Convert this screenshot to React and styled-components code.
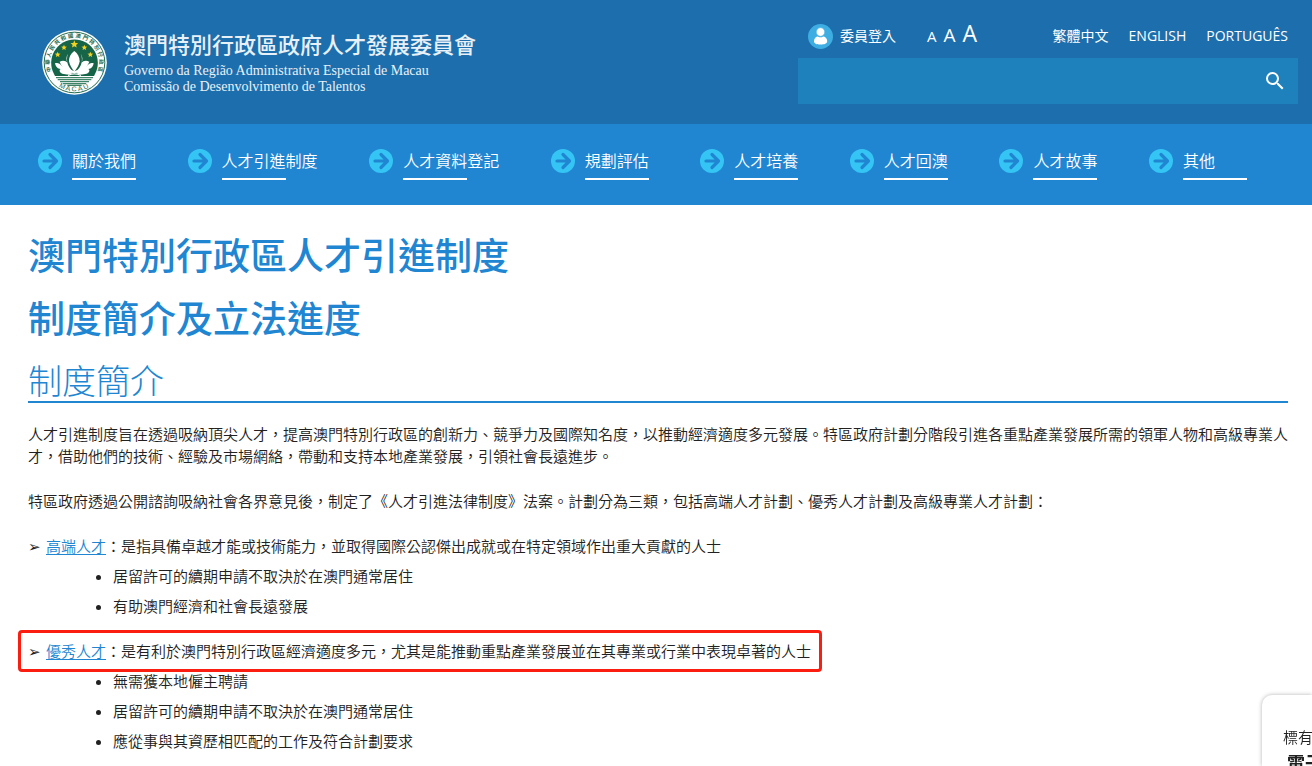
import React from "react";
import styled, { createGlobalStyle } from "styled-components";

const GlobalStyle = createGlobalStyle`
  * { box-sizing: border-box; }
  body {
    margin: 0;
    background: #fff;
    color: #212121;
    font-family: "Open Sans", "Noto Sans CJK TC", sans-serif;
    font-size: 15px;
    text-spacing-trim: space-all;
  }
  h1, h2, h3, p, ul { margin: 0; padding: 0; }
  a { color: inherit; text-decoration: none; }
  button { padding: 0; border: 0; background: none; color: inherit; font: inherit; cursor: pointer; }
`;

const Header = styled.header`
  display: flex;
  justify-content: space-between;
  align-items: flex-start;
  min-height: 124px;
  padding: 24px 14px 20px 42px;
  background: #1c6eac;
  color: #fff;
`;

const Brand = styled.a`
  display: flex;
  gap: 17px;
  padding-top: 6px;
`;

const BrandText = styled.span`
  display: flex;
  flex-direction: column;
  white-space: nowrap;
  color: #e9f1f8;
  font-family: "Liberation Serif", serif;
  font-size: 14px;
  line-height: 16px;
`;

const BrandName = styled.span`
  margin-bottom: 6px;
  font-family: "Noto Sans CJK TC", sans-serif;
  font-size: 22px;
  font-weight: 500;
  line-height: 27px;
`;

const Tools = styled.div`
  width: 500px;
`;

const Utility = styled.div`
  display: flex;
  align-items: center;
  height: 24px;
  margin-bottom: 10px;
  padding: 0 10px;
  font-size: 14px;
  line-height: 24px;
`;

const Login = styled.a`
  display: flex;
  align-items: center;
  gap: 7px;
  white-space: nowrap;
`;

const FontSizes = styled.div`
  display: flex;
  align-items: baseline;
  align-self: flex-start;
  gap: 7px;
  margin-left: 31px;
`;

const SizeButton = styled.button`
  && {
    font-size: ${(p) => p.$size}px;
    line-height: 18px;
  }
`;

const Languages = styled.nav`
  display: flex;
  gap: 20px;
  margin-left: auto;
`;

const Search = styled.form`
  display: flex;
  height: 46px;
  background: #1f81bc;
`;

const SearchInput = styled.input`
  flex: 1;
  min-width: 0;
  padding: 0 14px;
  border: 0;
  outline: 0;
  background: transparent;
  color: #fff;
  font: inherit;
`;

const SearchButton = styled.button`
  display: flex;
  align-items: center;
  justify-content: center;
  width: 46px;
`;

const Nav = styled.nav`
  display: flex;
  justify-content: space-between;
  padding: 24px 65px 25px 38px;
  background: #2186d2;
  color: #fff;
`;

const NavItem = styled.a`
  display: flex;
  gap: 10px;
  font-size: 16px;
  line-height: 26px;
  white-space: nowrap;
`;

const NavLabel = styled.span`
  min-width: 64px;
  font-weight: 350;
  &::after {
    content: "";
    display: block;
    width: 64px;
    height: 2px;
    margin-top: 4px;
    background: #fff;
  }
`;

const Main = styled.main`
  padding: 19px 24px 9px 28px;
`;

const Title = styled.h2`
  color: #2186d2;
  font-size: 37px;
  font-weight: 500;
  line-height: 63px;
`;

const SectionTitle = styled.h3`
  margin: 12px 0 20px;
  border-bottom: 2px solid #2186d2;
  color: #2186d2;
  font-size: 34px;
  font-weight: 300;
  line-height: 39px;
`;

const Paragraph = styled.p`
  margin-bottom: 23px;
  font-weight: 350;
  line-height: 22px;
`;

const Scheme = styled.section`
  margin-bottom: 19px;
  font-weight: 350;
`;

const SchemeLine = styled.p`
  position: relative;
  width: fit-content;
  line-height: 22px;
  ${(p) => p.$marked && `
    &::after {
      content: "";
      position: absolute;
      inset: -10px -11px -10px -10px;
      border: 3px solid #fb1d10;
      border-radius: 4px;
      pointer-events: none;
    }
  `}
`;

const Arrow = styled.span`
  display: inline-block;
  width: 18px;
  font-family: "DejaVu Sans", sans-serif;
  line-height: 1;
`;

const SchemeLink = styled.a`
  && {
    color: #2186d2;
    text-decoration: underline;
    text-underline-offset: 2px;
  }
`;

const Points = styled.ul`
  && {
    margin-top: 4px;
    padding-left: 85px;
  }
  line-height: 30px;
`;

const Notice = styled.aside`
  position: fixed;
  right: 0;
  bottom: 0;
  width: 50px;
  height: 71px;
  padding: 30px 0 0 21px;
  overflow: hidden;
  border-radius: 10px 0 0 0;
  background: #fff;
  box-shadow: 0 0 4px rgba(0, 0, 0, 0.3);
  white-space: nowrap;
  line-height: 24px;
  font-weight: 350;
`;

const NoticeTitle = styled.strong`
  display: block;
  padding-left: 4px;
  font-size: 18px;
  font-weight: 700;
  line-height: 28px;
`;

const Star = ({ x, y, r }) => {
  const points = Array.from({ length: 10 }, (_, i) => {
    const a = (-90 + i * 36) * (Math.PI / 180);
    const d = i % 2 ? r * 0.45 : r;
    return `${x + d * Math.cos(a)},${y + d * Math.sin(a)}`;
  }).join(" ");
  return <polygon points={points} fill="#f4d21f" />;
};

const Emblem = () => (
  <svg width="65" height="65" viewBox="0 0 195 195" aria-hidden="true">
    <circle cx="97.5" cy="97.5" r="97" fill="#fff" />
    <circle cx="97.5" cy="97.5" r="91" fill="none" stroke="#226b50" strokeWidth="3" />
    <g fill="#226b50" fontFamily="Noto Sans CJK TC, sans-serif" fontSize="16" fontWeight="700" textAnchor="middle">
      {[..."中華人民共和國澳門特別行政區"].map((c, i) => (
        <text key={i} x="97.5" y="23" transform={`rotate(${-105 + (i * 210) / 13} 97.5 97.5)`}>{c}</text>
      ))}
    </g>
    <g fill="#226b50" fontFamily="Liberation Sans, sans-serif" fontSize="21" textAnchor="middle">
      {[..."MACAU"].map((c, i) => (
        <text key={i} x="97.5" y="184" transform={`rotate(${27 - i * 13} 97.5 97.5)`}>{c}</text>
      ))}
    </g>
    <path d="M36 132A70 70 0 1 1 159 132Z" fill="#176549" />
    <path d="M36 132H159L156 138H39Z" fill="#176549" />
    <path d="M42 143H153M47 149H148M54 155H141M63 161H132M76 166H119" stroke="#3e8268" strokeWidth="4" />
    <Star x={97} y={43} r={12} />
    <Star x={66} y={53} r={9} />
    <Star x={127} y={53} r={9} />
    <Star x={47} y={74} r={9} />
    <Star x={145} y={74} r={9} />
    <g fill="#fff">
      <path d="M97 63C86 70 80 84 81 94C83 106 91 117 97 125C104 116 112 105 113 94C113 82 107 70 97 63Z" />
      <path d="M78 71C74 80 74 94 78 104C82 113 89 121 95 127C75 125 60 114 53 95C64 90 71 93 77 99C72 89 72 80 78 71Z" />
      <path d="M116 71C121 80 121 94 117 104C113 113 106 121 100 127C120 125 134 114 142 95C131 90 124 93 118 99C123 89 122 80 116 71Z" />
      <path d="M39 100C47 97 54 101 58 106C66 117 78 125 94 128C84 135 67 135 57 129C52 125 51 119 56 117C47 117 41 110 39 100Z" />
      <path d="M155 100C147 97 141 101 136 106C129 117 116 125 101 128C111 135 128 135 138 129C143 125 144 119 139 117C148 117 153 110 155 100Z" />
      <path d="M58 108L97 124L137 108L128 122L97 130L66 122Z" />
    </g>
    <path d="M78 136Q97 127 117 136" fill="none" stroke="#fff" strokeWidth="4" />
  </svg>
);

const UserIcon = () => (
  <svg width="25" height="25" viewBox="0 0 25 25" aria-hidden="true">
    <circle cx="12.5" cy="12.5" r="12.5" fill="#3eade2" />
    <path d="M6 17.2C6 14.4 8 12.5 10 12.5Q12.5 14.2 15 12.5C17 12.5 19.2 14.4 19.2 17.2C19.2 19.6 16.5 20.5 12.5 20.5S6 19.6 6 17.2Z" fill="#fff" />
    <circle cx="12.5" cy="8" r="4.4" fill="#fff" stroke="#3eade2" strokeWidth="0.8" />
  </svg>
);

const SearchIcon = () => (
  <svg width="24" height="24" viewBox="0 0 24 24" aria-hidden="true">
    <path
      fill="#fff"
      d="M15.5 14h-.79l-.28-.27A6.471 6.471 0 0 0 16 9.5 6.5 6.5 0 1 0 9.5 16c1.61 0 3.09-.59 4.23-1.57l.27.28v.79l5 4.99L20.49 19l-4.99-5zm-6 0C7.01 14 5 11.99 5 9.5S7.01 5 9.5 5 14 7.01 14 9.5 11.99 14 9.5 14z"
    />
  </svg>
);

const ArrowIcon = () => (
  <svg width="24" height="26" viewBox="0 0 24 26" aria-hidden="true">
    <circle cx="12" cy="13" r="12" fill="#35c5f4" />
    <path d="M6 13H18M12 6.5L18.5 13L12 19.5" fill="none" stroke="#2186d2" strokeWidth="3.2" strokeLinecap="round" strokeLinejoin="round" />
  </svg>
);

const NAV = ["關於我們", "人才引進制度", "人才資料登記", "規劃評估", "人才培養", "人才回澳", "人才故事", "其他"];

const SCHEMES = [
  {
    name: "高端人才",
    text: "：是指具備卓越才能或技術能力，並取得國際公認傑出成就或在特定領域作出重大貢獻的人士",
    points: ["居留許可的續期申請不取決於在澳門通常居住", "有助澳門經濟和社會長遠發展"],
  },
  {
    name: "優秀人才",
    text: "：是有利於澳門特別行政區經濟適度多元，尤其是能推動重點產業發展並在其專業或行業中表現卓著的人士",
    points: ["無需獲本地僱主聘請", "居留許可的續期申請不取決於在澳門通常居住", "應從事與其資歷相匹配的工作及符合計劃要求"],
    marked: true,
  },
];

export default function App() {
  return (
    <>
      <GlobalStyle />
      <Header lang="zh-Hant">
        <Brand href="#">
          <Emblem />
          <BrandText>
            <BrandName>澳門特別行政區政府人才發展委員會</BrandName>
            <span>Governo da Região Administrativa Especial de Macau</span>
            <span>Comissão de Desenvolvimento de Talentos</span>
          </BrandText>
        </Brand>
        <Tools>
          <Utility>
            <Login href="#"><UserIcon />委員登入</Login>
            <FontSizes>
              <SizeButton type="button" $size={15}>A</SizeButton>
              <SizeButton type="button" $size={19}>A</SizeButton>
              <SizeButton type="button" $size={23}>A</SizeButton>
            </FontSizes>
            <Languages>
              <a href="#">繁體中文</a>
              <a href="#">ENGLISH</a>
              <a href="#">PORTUGUÊS</a>
            </Languages>
          </Utility>
          <Search role="search">
            <SearchInput type="text" aria-label="搜尋" />
            <SearchButton type="button" aria-label="搜尋"><SearchIcon /></SearchButton>
          </Search>
        </Tools>
      </Header>
      <Nav lang="zh-Hant">
        {NAV.map((label) => (
          <NavItem href="#" key={label}>
            <ArrowIcon />
            <NavLabel>{label}</NavLabel>
          </NavItem>
        ))}
      </Nav>
      <Main lang="zh-Hant">
        <Title>澳門特別行政區人才引進制度</Title>
        <Title>制度簡介及立法進度</Title>
        <SectionTitle>制度簡介</SectionTitle>
        <Paragraph>
          人才引進制度旨在透過吸納頂尖人才，提高澳門特別行政區的創新力、競爭力及國際知名度，以推動經濟適度多元發展。特區政府計劃分階段引進各重點產業發展所需的領軍人物和高級專業人才，借助他們的技術、經驗及市場網絡，帶動和支持本地產業發展，引領社會長遠進步。
        </Paragraph>
        <Paragraph>
          特區政府透過公開諮詢吸納社會各界意見後，制定了《人才引進法律制度》法案。計劃分為三類，包括高端人才計劃、優秀人才計劃及高級專業人才計劃：
        </Paragraph>
        {SCHEMES.map((s) => (
          <Scheme key={s.name}>
            <SchemeLine $marked={s.marked}>
              <Arrow>➢</Arrow>
              <SchemeLink href="#">{s.name}</SchemeLink>
              {s.text}
            </SchemeLine>
            <Points>
              {s.points.map((t) => <li key={t}>{t}</li>)}
            </Points>
          </Scheme>
        ))}
      </Main>
      <Notice lang="zh-Hant">
        標有
        <NoticeTitle>電子</NoticeTitle>
      </Notice>
    </>
  );
}
